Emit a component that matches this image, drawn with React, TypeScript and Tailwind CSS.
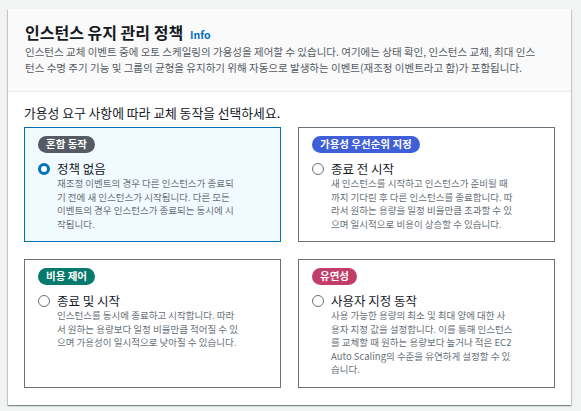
import React from "react";

type Option = {
  badge: string;
  badgeClass: string;
  title: string;
  lines: string[];
  selected?: boolean;
};

const options: Option[] = [
  {
    badge: "혼합 동작",
    badgeClass: "bg-[#545b64]",
    title: "정책 없음",
    selected: true,
    lines: [
      "재조정 이벤트의 경우 다른 인스턴스가 종료되",
      "기 전에 새 인스턴스가 시작됩니다. 다른 모든",
      "이벤트의 경우 인스턴스가 종료되는 동시에 시",
      "작됩니다.",
    ],
  },
  {
    badge: "가용성 우선순위 지정",
    badgeClass: "bg-[#3f5fd8]",
    title: "종료 전 시작",
    lines: [
      "새 인스턴스를 시작하고 인스턴스가 준비될 때",
      "까지 기다린 후 다른 인스턴스를 종료합니다. 따",
      "라서 원하는 용량을 일정 비율만큼 초과할 수 있",
      "으며 일시적으로 비용이 상승할 수 있습니다.",
    ],
  },
  {
    badge: "비용 제어",
    badgeClass: "bg-[#067a6c]",
    title: "종료 및 시작",
    lines: [
      "인스턴스를 동시에 종료하고 시작합니다. 따라",
      "서 원하는 용량보다 일정 비율만큼 적어질 수 있",
      "으며 가용성이 일시적으로 낮아질 수 있습니다.",
    ],
  },
  {
    badge: "유연성",
    badgeClass: "bg-[#c33d69]",
    title: "사용자 지정 동작",
    lines: [
      "사용 가능한 용량의 최소 및 최대 양에 대한 사",
      "용자 지정 값을 설정합니다. 이를 통해 인스턴스",
      "를 교체할 때 원하는 용량보다 높거나 적은 EC2",
      "Auto Scaling의 수준을 유연하게 설정할 수 있",
      "습니다.",
    ],
  },
];

export default function App() {
  return (
    <div className="min-h-screen bg-[#f2f3f3] px-2 pt-[9px] font-['Noto_Sans_CJK_KR',sans-serif]">
      <div className="w-[563px] bg-white shadow-[0_1px_1px_0_rgba(0,28,36,0.3),1px_1px_1px_0_rgba(0,28,36,0.15),-1px_1px_1px_0_rgba(0,28,36,0.15)]">
        <div className="border-b border-[#eaeded] bg-[#fafafa] px-[17px] pb-[16px] pt-[12px]">
          <div className="flex h-[22px] items-baseline gap-[7px]">
            <h2 className="text-[16px] font-bold leading-[22px] text-[#16191f]">
              인스턴스 유지 관리 정책
            </h2>
            <span className="text-[10.5px] font-bold leading-[22px] text-[#0073bb]">Info</span>
          </div>
          <p className="mt-[1px] whitespace-nowrap text-[10.5px] leading-[15.5px] text-[#545b64]">
            인스턴스 교체 이벤트 중에 오토 스케일링의 가용성을 제어할 수 있습니다. 여기에는 상태 확인, 인스턴스 교체, 최대 인스
            <br />
            턴스 수명 주기 기능 및 그룹의 균형을 유지하기 위해 자동으로 발생하는 이벤트(재조정 이벤트라고 함)가 포함됩니다.
          </p>
        </div>

        <div className="px-4 pb-[17px] pt-[13px]">
          <p className="h-[16px] text-[12.8px] leading-[16px] text-[#16191f]">
            가용성 요구 사항에 따라 교체 동작을 선택하세요.
          </p>
          <div className="mt-[6px] grid grid-cols-2 gap-[17px]">
            {options.map((o) => (
              <OptionCard key={o.title} option={o} />
            ))}
          </div>
        </div>
      </div>
    </div>
  );
}

function OptionCard({ option }: { option: Option }) {
  return (
    <div
      className={
        option.selected
          ? "flex flex-col border border-[#0073bb] bg-[#f1faff] px-[13px] pb-[10px] pt-[8px]"
          : "flex flex-col border border-[#687078] bg-white px-[13px] pb-[10px] pt-[8px]"
      }
    >
      <div className="flex">
        <span
          className={`flex h-[17px] items-center rounded-full px-[8px] text-[10.5px] font-bold leading-none text-white ${option.badgeClass}`}
        >
          {option.badge}
        </span>
      </div>
      <div className="mt-[8px] flex items-start gap-[7px]">
        <div className="flex h-[16px] items-center">
          {option.selected ? (
            <span className="block h-[12px] w-[12px] rounded-full border-[3.5px] border-[#0073bb] bg-white" />
          ) : (
            <span className="block h-[12px] w-[12px] rounded-full border-[1.5px] border-[#687078] bg-white" />
          )}
        </div>
        <div>
          <div className="h-[16px] text-[12.5px] leading-[16px] text-[#16191f]">{option.title}</div>
          <p className="whitespace-nowrap text-[9.5px] leading-[13.5px] text-[#687078]">
            {option.lines.map((line, i) => (
              <React.Fragment key={i}>
                {line}
                {i < option.lines.length - 1 && <br />}
              </React.Fragment>
            ))}
          </p>
        </div>
      </div>
    </div>
  );
}
